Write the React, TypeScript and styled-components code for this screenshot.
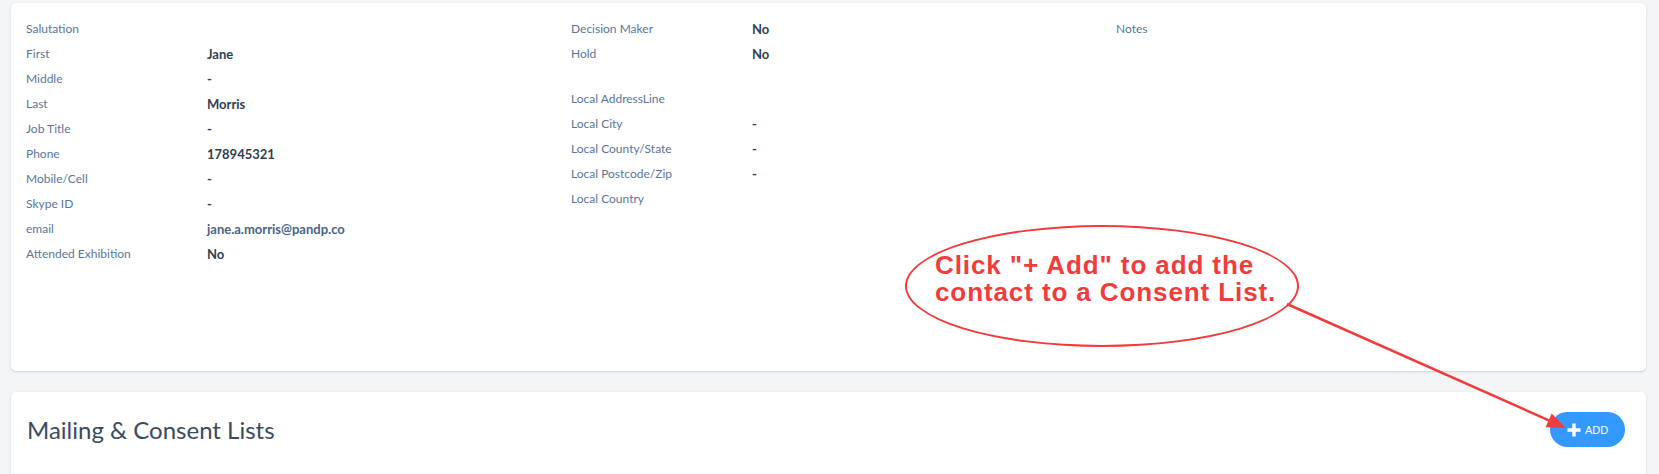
import React from "react";
import styled, { createGlobalStyle } from "styled-components";

const GlobalStyle = createGlobalStyle`
  html, body {
    margin: 0;
    padding: 0;
    background: #f4f5f7;
    font-family: Lato, "Open Sans", Arial, sans-serif;
  }
  * { box-sizing: border-box; }
`;

const Page = styled.div`
  position: relative;
  display: flex;
  flex-direction: column;
  gap: 21px;
  padding: 3px 13px 0 11px;
  width: 1659px;
  height: 474px;
  overflow: hidden;
`;

const Card = styled.section<{ $height: number }>`
  background: #ffffff;
  border-radius: 5px;
  box-shadow: 0 1px 3px rgba(30, 40, 60, 0.12), 0 1px 1px rgba(30, 40, 60, 0.05);
  height: ${(p) => p.$height}px;
  flex-shrink: 0;
`;

const DetailsGrid = styled.div`
  display: grid;
  grid-template-columns: repeat(3, 1fr);
  padding-top: 13px;
`;

const Column = styled.div`
  display: flex;
  flex-direction: column;
  padding: 0 15px;
`;

const Row = styled.div`
  display: grid;
  grid-template-columns: 181px 1fr;
  height: 25px;
  align-items: center;
`;

const Spacer = styled.div<{ $size: number }>`
  height: ${(p) => p.$size}px;
`;

const Label = styled.span`
  font-size: 12px;
  color: #5a759b;
  white-space: nowrap;
`;

const Value = styled.span<{ $link?: boolean }>`
  font-size: 13px;
  font-weight: 700;
  color: ${(p) => (p.$link ? "#4a6488" : "#323e50")};
  white-space: nowrap;
`;

const Header = styled.div`
  display: flex;
  align-items: center;
  justify-content: space-between;
  padding: 20px 21px 20px 16px;
`;

const Title = styled.h2`
  margin: 0;
  font-size: 24px;
  font-weight: 400;
  color: #3a4a5f;
`;

const AddButton = styled.button`
  display: inline-flex;
  align-items: center;
  gap: 4px;
  height: 35px;
  width: 75px;
  padding: 0 0 0 17px;
  border: none;
  border-radius: 18px;
  background: #3399fe;
  color: #ffffff;
  font-family: "Liberation Sans", Arial, sans-serif;
  font-size: 11px;
  cursor: pointer;
`;

const Callout = styled.div`
  position: absolute;
  left: 905px;
  top: 225px;
  width: 394px;
  height: 122px;
  border: 2.5px solid #f03c3c;
  border-radius: 50%;
  padding: 25px 0 0 28px;
  font-family: "Liberation Sans", Arial, sans-serif;
  font-weight: 700;
  font-size: 26px;
  letter-spacing: 0.9px;
  line-height: 27px;
  color: #f03c3c;
  white-space: nowrap;
`;

const ArrowLayer = styled.svg`
  position: absolute;
  left: 0;
  top: 0;
  width: 1659px;
  height: 474px;
  pointer-events: none;
`;

type Field = { label: string; value?: string; link?: boolean; gapBefore?: number };

const personal: Field[] = [
  { label: "Salutation" },
  { label: "First", value: "Jane" },
  { label: "Middle", value: "-" },
  { label: "Last", value: "Morris" },
  { label: "Job Title", value: "-" },
  { label: "Phone", value: "178945321" },
  { label: "Mobile/Cell", value: "-" },
  { label: "Skype ID", value: "-" },
  { label: "email", value: "jane.a.morris@pandp.co", link: true },
  { label: "Attended Exhibition", value: "No" },
];

const local: Field[] = [
  { label: "Decision Maker", value: "No" },
  { label: "Hold", value: "No" },
  { label: "Local AddressLine", gapBefore: 20 },
  { label: "Local City", value: "-" },
  { label: "Local County/State", value: "-" },
  { label: "Local Postcode/Zip", value: "-" },
  { label: "Local Country" },
];

const notes: Field[] = [{ label: "Notes" }];

function FieldColumn({ fields }: { fields: Field[] }) {
  return (
    <Column>
      {fields.map((f) => (
        <React.Fragment key={f.label}>
          {f.gapBefore ? <Spacer $size={f.gapBefore} /> : null}
          <Row>
            <Label>{f.label}</Label>
            <Value $link={f.link}>{f.value ?? ""}</Value>
          </Row>
        </React.Fragment>
      ))}
    </Column>
  );
}

function PlusIcon() {
  return (
    <svg width="14" height="14" viewBox="0 0 14 14">
      <path d="M5.3 0.5h3.4v4.8h4.8v3.4H8.7v4.8H5.3V8.7H0.5V5.3h4.8z" fill="#ffffff" />
    </svg>
  );
}

export default function App() {
  const from = { x: 1287, y: 304 };
  const tip = { x: 1566, y: 428 };
  const dx = tip.x - from.x;
  const dy = tip.y - from.y;
  const len = Math.hypot(dx, dy);
  const ux = dx / len;
  const uy = dy / len;
  const headLen = 19;
  const half = 7.5;
  const bx = tip.x - ux * headLen;
  const by = tip.y - uy * headLen;
  const head = `${tip.x},${tip.y} ${bx - uy * half},${by + ux * half} ${bx + uy * half},${by - ux * half}`;

  return (
    <>
      <GlobalStyle />
      <Page>
        <Card $height={368}>
          <DetailsGrid>
            <FieldColumn fields={personal} />
            <FieldColumn fields={local} />
            <FieldColumn fields={notes} />
          </DetailsGrid>
        </Card>
        <Card $height={140}>
          <Header>
            <Title>Mailing &amp; Consent Lists</Title>
            <AddButton>
              <PlusIcon />
              ADD
            </AddButton>
          </Header>
        </Card>
        <Callout>
          Click "+ Add" to add the
          <br />
          contact to a Consent List.
        </Callout>
        <ArrowLayer>
          <line
            x1={from.x}
            y1={from.y}
            x2={bx + ux * 2}
            y2={by + uy * 2}
            stroke="#f03c3c"
            strokeWidth={2.5}
          />
          <polygon points={head} fill="#f03c3c" />
        </ArrowLayer>
      </Page>
    </>
  );
}
